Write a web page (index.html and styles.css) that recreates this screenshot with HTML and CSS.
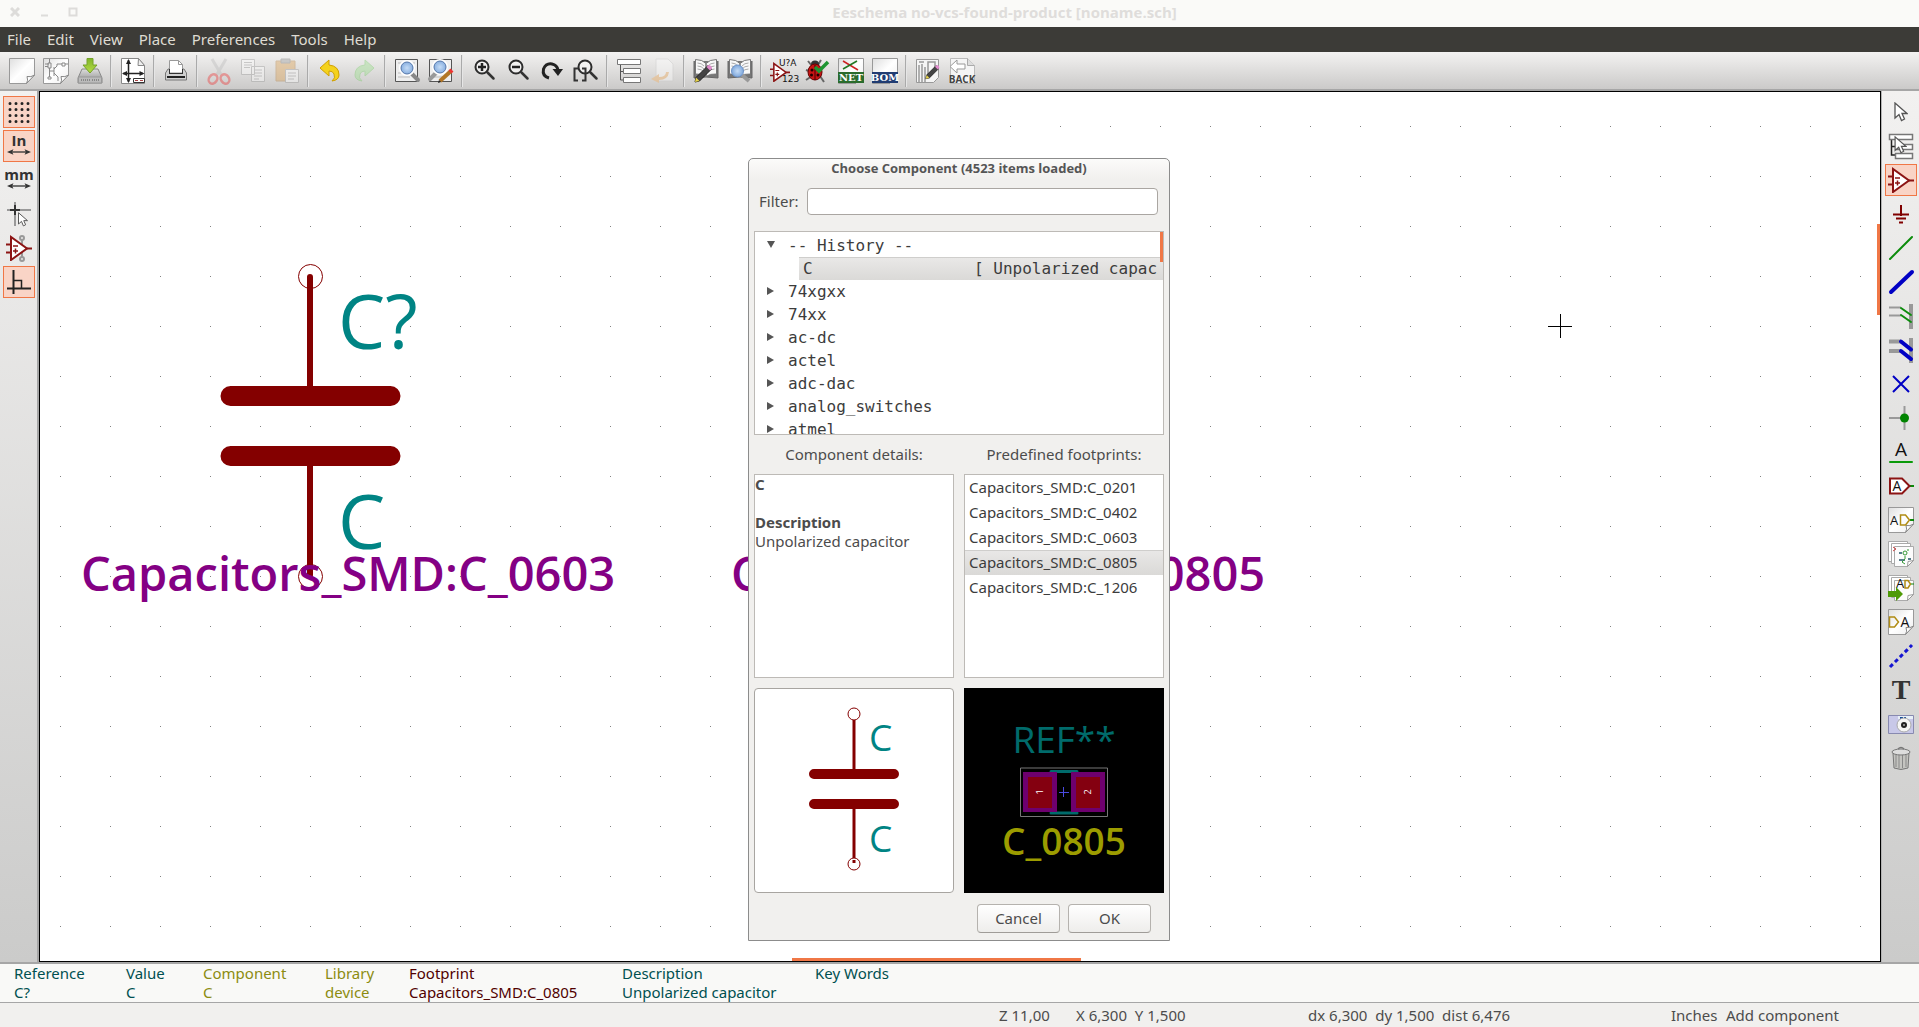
FILE: index.html
```html
<!DOCTYPE html>
<html lang="en">
<head>
<meta charset="utf-8">
<meta name="viewport" content="width=device-width, initial-scale=1">
<title>Eeschema no-vcs-found-product [noname.sch]</title>
<link rel="stylesheet" href="styles.css">
</head>
<body>
<svg class="defs" aria-hidden="true">
  <defs>
    <linearGradient id="paper" x1="0" y1="0" x2="1" y2="1"><stop offset="0" stop-color="#dedede"/><stop offset=".5" stop-color="#fff"/><stop offset="1" stop-color="#eee"/></linearGradient>
    <linearGradient id="metal" x1="0" y1="0" x2="0" y2="1"><stop offset="0" stop-color="#ddd"/><stop offset="1" stop-color="#8a8a8a"/></linearGradient>
    <linearGradient id="green" x1="0" y1="0" x2="0" y2="1"><stop offset="0" stop-color="#7fb52a"/><stop offset="1" stop-color="#b6dc46"/></linearGradient>
    <radialGradient id="lens"><stop offset="0" stop-color="#c5dcf6"/><stop offset="1" stop-color="#7fa8dc"/></radialGradient>
    <symbol id="sheet" viewBox="0 0 26 26"><path d="M.5 .5H25.500V17l-8 8.500H.5z" fill="url(#paper)" stroke="#999"/><path d="M25.500 17l-8 8.500q2-3 .5-7 4 1 7.500-1.500z" fill="#fff" stroke="#888"/></symbol>
    <symbol id="opamp" viewBox="0 0 26 26"><path d="M0 9.500h5M0 17.500h5M20 13.500h6" stroke="#8c1414" stroke-width="2"/><path d="M5 2v23L21 13.500z" fill="#fff" stroke="#8c1414" stroke-width="2"/><path d="M7 11h5M7 16h5M9.500 13.500v5" stroke="#8c1414" stroke-width="1.500"/></symbol>
    <symbol id="pointer" viewBox="0 0 14 20"><path d="M1 1v15l4-3.500 2.500 6 3-1.500-2.500-5.500h5z" fill="#fff" stroke="#555" stroke-width="1.300"/></symbol>
    <symbol id="glass" viewBox="0 0 26 26"><path d="M13.500 13.500l6 6" stroke="#333" stroke-width="2.500" stroke-linecap="round"/><circle cx="8" cy="8" r="6.500" fill="#fff" fill-opacity=".5" stroke="#2c2c2c" stroke-width="2"/></symbol>
    <symbol id="pencil" viewBox="0 0 20 20"><path d="M2 14.500L14 2.500l3.500 3.500L5.500 18 1 19z" fill="#444" stroke="#222"/><path d="M12.500 4l2-2q3 0 3.500 3.500l-2 2z" fill="#e08ccc"/><path d="M2 14.500L5.500 18 1 19z" fill="#e8d44c"/></symbol>
    <symbol id="book" viewBox="0 0 26 22"><path d="M1 3v17l12-1 12 1V3" fill="#777" stroke="#666"/><path d="M2.500 1.500q7 0 10.500 4v13q-4-3-10.500-2.500zM23.500 1.500q-7 0-10.500 4v13q4-3 10.500-2.500z" fill="#f8f8f8" stroke="#777"/><path d="M4.500 5q4 0 6.500 3M4.500 8q4 0 6.500 3M4.500 11q4 0 6.500 3M21.500 5q-4 0-6.500 3M21.500 8q-4 0-6.500 3M21.500 11q-4 0-6.500 3" fill="none" stroke="#aaa"/></symbol>
    <symbol id="leftright" viewBox="0 0 26 6"><path d="M3 3h20" stroke="#3a3a3a" stroke-width="1.500"/><path d="M0 3l7-3-1.500 3L7 6zM26 3l-7-3 1.500 3L19 6z" fill="#333"/></symbol>
    <symbol id="pages" viewBox="0 0 26 26"><path d="M.5 .5h19v20H.5z" fill="#fff" stroke="#aaa"/><path d="M3.500 2.500h19v20h-19z" fill="#fff" stroke="#aaa"/><path d="M6.500 5.500h19v14l-6 6h-13z" fill="#fcfcfc" stroke="#aaa"/><path d="M25.500 19.500l-6 6 .5-5z" fill="#fff" stroke="#999"/></symbol>
  </defs>
</svg>

<header class="titlebar">
  <div class="window-buttons">
    <button aria-label="Close"><svg width="10" height="10"><path d="M1 1l8 8M9 1L1 9" stroke="#dddcda" stroke-width="3"/></svg></button>
    <button aria-label="Minimize"><svg width="10" height="10"><path d="M2 8.500h7" stroke="#dddcda" stroke-width="2"/></svg></button>
    <button aria-label="Maximize"><svg width="10" height="10"><path d="M1.500 1.500h7v7h-7z" fill="none" stroke="#dddcda" stroke-width="2"/></svg></button>
  </div>
  <h1>Eeschema no-vcs-found-product [noname.sch]</h1>
</header>

<nav class="menubar">
  <button>File</button><button>Edit</button><button>View</button><button>Place</button><button>Preferences</button><button>Tools</button><button>Help</button>
</nav>

<div class="toolbar" role="toolbar" aria-label="Main tools">
  <button aria-label="New"><svg class="icon"><use href="#sheet"/></svg></button>
  <button aria-label="Open"><svg class="icon"><use href="#sheet"/><path d="M2 6h4M2 8.500h3M6.500 1v4M5 5h3v5H5zM6.500 10v9M6.500 13H11M11 9v9M11 11l3-3V6h5M11 15l4 4v4M19 5h3v3h-3zM22 6h3M5 19h3v2H5z" fill="none" stroke="#888"/></svg></button>
  <button aria-label="Save"><svg class="icon"><path d="M5 11h16l4 9v5H1v-5z" fill="url(#metal)" stroke="#888"/><path d="M1.500 19h23v6h-23z" fill="#bbb" stroke="#999"/><path d="M4 22h9M15 22h8" stroke="#888" stroke-width="2" stroke-dasharray="1 1"/><path d="M10 .5h6V7h4l-7 8-7-8h4z" fill="url(#green)" stroke="#76a32a"/></svg></button>
  <span class="sep"></span>
  <button aria-label="Page settings"><svg class="icon"><path d="M1.500 .5h17l6 7v18h-23z" fill="#fff" stroke="#888"/><path d="M18.500 .5l-.5 7h6.500z" fill="#eee" stroke="#888"/><path d="M8.500 2v22M3 15.500h20" stroke="#222" stroke-width="1.500"/><path d="M8.500 1l-2.500 5h5zM8.500 25L6 20h5zM2 15.500l5-2.500v5zM24.500 15.500l-5-2.500v5z" fill="#222"/><path d="M13.500 20.500h11v4h-11z" fill="#fff" stroke="#333"/><path d="M15 22.500h3M20 22.500h3" stroke="#a44"/></svg></button>
  <span class="sep"></span>
  <button aria-label="Print"><svg class="icon"><path d="M5 11h16l2.500 4v7h-21v-7z" fill="#d0d0d0" stroke="#777"/><path d="M6.500 15V2.500h9l4 4V15z" fill="#fff" stroke="#999"/><path d="M15.500 2.500v4h4" fill="none" stroke="#999"/><path d="M6 11h1v4h12v-4h1v5H6z" fill="#333"/><path d="M4 18h18v2H4z" fill="#222"/></svg></button>
  <span class="sep"></span>
  <button disabled aria-label="Cut"><svg class="icon faded"><path d="M6 1l10 17M20 1L10 18" stroke="#bbb" stroke-width="3"/><ellipse cx="7" cy="21" rx="4" ry="5" transform="rotate(35 7 21)" fill="none" stroke="#e33" stroke-width="2.500"/><ellipse cx="19" cy="21" rx="4" ry="5" transform="rotate(-35 19 21)" fill="none" stroke="#e33" stroke-width="2.500"/></svg></button>
  <button disabled aria-label="Copy"><svg class="icon faded"><path d="M1.500 1.500h13v15h-13zM11.500 8.500h13v15h-13z" fill="#fff" stroke="#999"/><path d="M4 4.500h8M4 7h8M4 9.500h6M14 12h8M14 15h8M14 18h8M14 21h5" stroke="#999"/></svg></button>
  <button disabled aria-label="Paste"><svg class="icon faded"><path d="M2 3h19v20H2z" fill="#dca050" stroke="#b48040"/><path d="M7 1h9v4H7z" fill="#999" stroke="#777"/><path d="M11.500 11.500h13v13h-13z" fill="#fff" stroke="#999"/><path d="M14 15h8M14 18h8M14 21h6" stroke="#999"/></svg></button>
  <span class="sep"></span>
  <button aria-label="Undo"><svg class="icon"><path d="M12 2v5q10 1 10 10 0 5-7 6 4-3 2-7-1-3-5-3v5L3 10z" fill="#f4d21c" stroke="#d0a000"/></svg></button>
  <button disabled aria-label="Redo"><svg class="icon faded"><path d="M14 2v5Q4 8 4 17q0 5 7 6-4-3-2-7 1-3 5-3v5l9-8z" fill="#9be08c" stroke="#7c6"/></svg></button>
  <span class="sep"></span>
  <button aria-label="Find"><svg class="icon"><path d="M1.500 1.500h22v22h-22z" fill="#eee" stroke="#555"/><path d="M4 5h17M4 15h4M4 19h12" stroke="#bbb"/><path d="M17 15l7 7" stroke="#888" stroke-width="4" stroke-linecap="round"/><circle cx="13" cy="10" r="7" fill="url(#lens)" stroke="#fff" stroke-width="2"/><circle cx="13" cy="10" r="6" fill="none" stroke="#5577aa"/></svg></button>
  <button aria-label="Find and replace"><svg class="icon"><path d="M1.500 1.500h22v22h-22z" fill="#eee" stroke="#555"/><path d="M4 19h12" stroke="#bbb"/><path d="M9 14l-7 7" stroke="#999" stroke-width="4" stroke-linecap="round"/><circle cx="12" cy="9" r="7" fill="url(#lens)" stroke="#fff" stroke-width="2"/><circle cx="12" cy="9" r="6" fill="none" stroke="#5577aa"/><path d="M12 23L23 13" stroke="#b27626" stroke-width="4"/><path d="M22 14l2-2" stroke="#e33" stroke-width="4"/><path d="M10 25l1-3 2 2z" fill="#222"/></svg></button>
  <span class="sep"></span>
  <button aria-label="Zoom in"><svg class="icon"><g transform="translate(3 1)"><use href="#glass" width="26" height="26"/><path d="M4 8h8M8 4v8" stroke="#222" stroke-width="2.500"/></g></svg></button>
  <button aria-label="Zoom out"><svg class="icon"><g transform="translate(3 1)"><use href="#glass" width="26" height="26"/><path d="M4 8h8" stroke="#222" stroke-width="2.500"/></g></svg></button>
  <button aria-label="Redraw"><svg class="icon"><path d="M10 20Q3 18 4.500 11 7 5 13 6q5 1 6 6" fill="none" stroke="#222" stroke-width="3"/><path d="M13.500 11H24l-5 7z" fill="#222"/></svg></button>
  <button aria-label="Zoom to fit"><svg class="icon"><g transform="translate(4 1)"><use href="#glass" width="26" height="26"/></g><path d="M5 10.500H1.500v12H5M9 10.500h3.500v12H9" fill="none" stroke="#333" stroke-width="2"/></svg></button>
  <span class="sep"></span>
  <button aria-label="Hierarchy"><svg class="icon"><path d="M4.500 7v15H9M4.500 13.500H8" fill="none" stroke="#555"/><path d="M1.500 1.500h23v5h-23zM7.500 10.500h17v5h-17zM7.500 19.500h17v5h-17z" fill="#fff" stroke="#777"/></svg></button>
  <button disabled aria-label="Leave sheet"><svg class="icon faded"><path d="M6 1h12l5 5v17H6z" fill="#fff" stroke="#ccc"/><path d="M16 14q0 5-7 5v-3l-8 5 8 4v-3q9 0 10-8z" fill="#f4b060"/></svg></button>
  <span class="sep"></span>
  <button aria-label="Library editor"><svg class="icon"><use href="#book" width="26" height="22"/><use href="#pencil" x="1" y="5" width="20" height="20"/></svg></button>
  <button aria-label="Library browser"><svg class="icon"><use href="#book" width="26" height="22"/><path d="M15 17l7 6" stroke="#999" stroke-width="4"/><circle cx="10.500" cy="13" r="6" fill="url(#lens)" stroke="#6d93c8"/></svg></button>
  <span class="sep"></span>
  <button aria-label="Annotate"><svg class="icon"><use href="#opamp" y="4" width="20" height="20"/><text x="9" y="8" class="tiny">U?A</text><text x="12" y="24" class="tiny">123</text></svg></button>
  <button aria-label="Electrical rules check"><svg class="icon"><path d="M4 3l4 5M17 2l-3 5M2 12l6 2M2 22l6-4M20 24l-4-6" stroke="#666" stroke-width="2"/><ellipse cx="11" cy="6" rx="4" ry="3.500" fill="#333"/><ellipse cx="11" cy="14" rx="7" ry="8" fill="#c81414" stroke="#600"/><path d="M11 7v15" stroke="#400"/><g fill="#200"><circle cx="8" cy="12" r="1.500"/><circle cx="14" cy="12" r="1.500"/><circle cx="7.500" cy="17" r="1.500"/><circle cx="14" cy="17" r="1.500"/></g><path d="M11 9l4 4 9-9" fill="none" stroke="#1e9632" stroke-width="3.500"/></svg></button>
  <button aria-label="Generate netlist"><svg class="icon"><use href="#sheet"/><path d="M5 3l15 9" stroke="#c22" stroke-width="1.500"/><path d="M5 11l14-8" stroke="#272" stroke-width="1.500"/><path d="M0 14h26v11H0z" fill="#2a6b2c"/><text x="13" y="23" class="tag">NET</text></svg></button>
  <button aria-label="Bill of materials"><svg class="icon"><use href="#sheet"/><path d="M0 14h26v11H0z" fill="#203c72"/><text x="13" y="23" class="tag">BOM</text></svg></button>
  <span class="sep"></span>
  <button aria-label="Run Pcbnew"><svg class="icon"><path d="M1.500 1.500h22v18l-5 5h-17z" fill="#f5f5f5" stroke="#999"/><path d="M4 24V7M7 24V6M10 24V9M13 20V4h7v6M4 4h5" fill="none" stroke="#999" stroke-width="1.500"/><use href="#pencil" x="10" y="5" width="16" height="17"/></svg></button>
  <button aria-label="Back import"><svg class="icon"><path d="M1.500 .5h17l7 7v18h-24z" fill="#f5f5f5" stroke="#bbb"/><path d="M18.500 .5v7h7" fill="#ddd" stroke="#aaa"/><path d="M1 8.500L8 2v4h8v5H8v4z" fill="#fff" stroke="#999"/><text x="13" y="25" class="back">BACK</text></svg></button>
</div>

<main class="workspace">
  <div class="sidebar" role="toolbar" aria-label="Display options">
    <button class="on" aria-label="Grid"><svg class="icon"><path d="M4 4.500h22M4 10.500h22M4 16.500h22M4 22.500h22" stroke="#222" stroke-width="3" stroke-linecap="round" stroke-dasharray="0 6"/></svg></button>
    <button class="on" aria-label="Inches"><svg class="icon"><text x="13" y="13" class="unit">In</text><use href="#leftright" x="1" y="16" width="24" height="6"/></svg></button>
    <button aria-label="Millimetres"><svg class="icon"><text x="13" y="13" class="unit">mm</text><use href="#leftright" x="1" y="16" width="24" height="6"/></svg></button>
    <button aria-label="Cursor shape"><svg class="icon"><path d="M1 9h3M14 9h11M9 1v3M9 14v11" stroke="#999" stroke-width="2"/><path d="M4 9h10M9 4v10" stroke="#333" stroke-width="2"/><use href="#pointer" x="11" y="11" width="12" height="15"/></svg></button>
    <button aria-label="Hidden pins"><svg class="icon"><g fill="none" stroke="#999" stroke-width="2"><circle cx="16" cy="3" r="2"/><circle cx="16" cy="24" r="2"/><path d="M16 5v17"/></g><use href="#opamp" width="26" height="26"/></svg></button>
    <button class="on" aria-label="Right angle wires"><svg class="icon"><path d="M7.500 1v24M1 19.500h24" stroke="#222" stroke-width="2"/><path d="M8 11.500h7.500V19" fill="none" stroke="#222" stroke-width="1.500"/></svg></button>
  </div>

  <section class="canvas" aria-label="Schematic">
    <svg class="drawing">
      <defs><pattern id="grid" x="20" y="34" width="50" height="50" patternUnits="userSpaceOnUse"><rect width="1" height="1" fill="#848484"/></pattern></defs>
      <rect width="100%" height="100%" fill="url(#grid)"/>
      <g class="part">
        <circle cx="270.500" cy="184.500" r="12" class="pin"/>
        <circle cx="270.500" cy="484.500" r="12" class="pin"/>
        <path d="M270 185v110M270 370v113" stroke-width="6" stroke-linecap="round"/>
        <path d="M190.500 304h160M190.500 364h160" stroke-width="20" stroke-linecap="round"/>
      </g>
      <text x="298" y="257" class="ref">C?</text>
      <text x="298" y="457" class="ref">C</text>
      <text x="41" y="499" class="footprint">Capacitors_SMD:C_0603</text>
      <text x="691" y="499" class="footprint">Capacitors_SMD:C_0805</text>
      <path d="M1508 234.500h24M1520.500 222v24" stroke="#000"/>
    </svg>
    <span class="thumb-v"></span>
    <span class="thumb-h"></span>

    <form class="dialog" role="dialog" aria-labelledby="dialog-title">
      <h2 id="dialog-title">Choose Component (4523 items loaded)</h2>
      <div class="filter"><label for="filter">Filter:</label><input id="filter" type="text"></div>
      <div class="tree">
        <ul role="tree">
          <li class="open" role="treeitem">-- History --</li>
          <li class="leaf" role="treeitem" aria-selected="true"><span class="name">C</span><span class="summary">[ Unpolarized capacitor ]</span></li>
          <li role="treeitem">74xgxx</li>
          <li role="treeitem">74xx</li>
          <li role="treeitem">ac-dc</li>
          <li role="treeitem">actel</li>
          <li role="treeitem">adc-dac</li>
          <li role="treeitem">analog_switches</li>
          <li role="treeitem">atmel</li>
        </ul>
      </div>
      <div class="panes">
        <h3>Component details:</h3>
        <h3>Predefined footprints:</h3>
        <div class="pane details"><b>C</b><br><br><b>Description</b><br>Unpolarized capacitor</div>
        <ul class="pane footprints" role="listbox" aria-label="Predefined footprints">
          <li role="option">Capacitors_SMD:C_0201</li>
          <li role="option">Capacitors_SMD:C_0402</li>
          <li role="option">Capacitors_SMD:C_0603</li>
          <li role="option" aria-selected="true">Capacitors_SMD:C_0805</li>
          <li role="option">Capacitors_SMD:C_1206</li>
        </ul>
        <svg class="preview symbol" viewBox="0 0 198 203">
          <g class="part">
            <circle cx="99" cy="25" r="6" class="pin"/>
            <circle cx="99" cy="175" r="6" class="pin"/>
            <path d="M99 31v50M99 118v51M99 171v3" stroke-width="3"/>
            <path d="M59 85h80M59 115h80" stroke-width="10" stroke-linecap="round"/>
          </g>
          <text x="114" y="62" class="ref small">C</text>
          <text x="114" y="163" class="ref small">C</text>
        </svg>
        <svg class="preview board" viewBox="0 0 200 205">
          <text x="100" y="65" class="fp-ref">REF**</text>
          <path d="M56.500 80h87v48.500h-87z" fill="none" stroke="#777"/>
          <path d="M87 83.500h26M87 125h26" stroke="#006b6b" stroke-width="3" stroke-linecap="round"/>
          <path d="M59 84h34v40H59zM107 84h34v40h-34z" fill="#6e006e"/>
          <path d="M64 89h24v31H64zM112 89h24v31h-24z" fill="#840010"/>
          <path d="M95 104.500h10M99.500 99v10" stroke="#4a4ae0"/>
          <text transform="translate(79 104) rotate(-90)" class="pad">1</text>
          <text transform="translate(127 104) rotate(-90)" class="pad">2</text>
          <text x="100" y="167" class="fp-val">C_0805</text>
        </svg>
      </div>
      <div class="actions"><button type="button">Cancel</button><button type="button">OK</button></div>
    </form>
  </section>

  <div class="sidebar right" role="toolbar" aria-label="Drawing tools">
    <button aria-label="Select"><svg class="icon"><use href="#pointer" x="6" y="3" width="14" height="20"/></svg></button>
    <button aria-label="Navigate hierarchy"><svg class="icon"><path d="M3.500 6v16H8M3.500 13.500H8" fill="none" stroke="#222" stroke-width="1.500"/><path d="M1.500 1.500h23v5h-23zM8.500 11.500h16v5h-16zM7.500 20.500h17v5h-17z" fill="#fff" stroke="#777" stroke-width="1.500"/><use href="#pointer" x="6" y="3" width="13" height="18"/></svg></button>
    <button class="on" aria-label="Place component"><svg class="icon"><use href="#opamp" width="26" height="26"/></svg></button>
    <button aria-label="Place power port"><svg class="icon"><path d="M13 4v11" stroke="#800000" stroke-width="2"/><path d="M5 13.500h16M8 17.500h10M11 21.500h4" stroke="#800000" stroke-width="2"/></svg></button>
    <button aria-label="Place wire"><svg class="icon"><path d="M2 24L24 2" stroke="#0c8c0c" stroke-width="2" stroke-linecap="round"/></svg></button>
    <button aria-label="Place bus"><svg class="icon"><path d="M3 23L24 3" stroke="#0000c4" stroke-width="4" stroke-linecap="round"/></svg></button>
    <button aria-label="Wire entry"><svg class="icon"><path d="M1 4.500h12M1 12.500h12" stroke="#999" stroke-width="2"/><path d="M23 1v25" stroke="#999" stroke-width="4"/><path d="M13 5l10 7M13 12l10 7" stroke="#0c8c0c" stroke-width="2" stroke-linecap="round"/></svg></button>
    <button aria-label="Bus entry"><svg class="icon"><path d="M1 4.500h12M1 14h12" stroke="#999" stroke-width="4"/><path d="M23 1v25" stroke="#999" stroke-width="4"/><path d="M13 4.500l10 8M13 14l10 8" stroke="#0000c4" stroke-width="4" stroke-linecap="round"/></svg></button>
    <button aria-label="No connect"><svg class="icon"><path d="M5 5l16 16M21 5L5 21" stroke="#0000c4" stroke-width="2"/></svg></button>
    <button aria-label="Junction"><svg class="icon"><path d="M1 13h12M16.500 1v24" stroke="#999" stroke-width="2"/><circle cx="16.500" cy="13" r="4.500" fill="#008400"/></svg></button>
    <button aria-label="Net label"><svg class="icon"><text x="13" y="17" class="letter">A</text><path d="M2 23h22" stroke="#0a9a0a" stroke-width="2" stroke-linecap="round"/></svg></button>
    <button aria-label="Global label"><svg class="icon"><path d="M21 13h5" stroke="#0a8a0a" stroke-width="2"/><path d="M2 5.500h12l7.500 7.500-7.500 7.500H2z" fill="#fff" stroke="#8c1414" stroke-width="2"/><text x="9" y="18" class="letter mid">A</text></svg></button>
    <button aria-label="Hierarchical label"><svg class="icon"><use href="#sheet"/><path d="M22 13h4" stroke="#0a8a0a" stroke-width="2"/><path d="M12.500 8h5l4 5-4 5h-5z" fill="none" stroke="#b08c14" stroke-width="1.500"/><text x="6" y="18" class="letter small">A</text></svg></button>
    <button aria-label="Hierarchical sheet"><svg class="icon"><use href="#pages"/><path d="M5 6l3 2M5 10l3-2" stroke="#c44"/><path d="M11 12h3M11 19h6M20 18h3" stroke="#256" stroke-width="1.500"/><circle cx="17" cy="12" r="2" fill="none" stroke="#393"/><path d="M17 15v3l-3 3 3 2M20 10v-2" fill="none" stroke="#393"/></svg></button>
    <button aria-label="Import labels"><svg class="icon"><use href="#pages"/><text x="12" y="13" class="letter small">A</text><path d="M17 5.500h3l2.500 3.500-2.500 4h-3z" fill="none" stroke="#b08c14" stroke-width="1.500"/><path d="M23 9h3" stroke="#0a8a0a"/><path d="M0 16h8v-4l7 7-7 7v-4H0z" fill="#4e9a06"/></svg></button>
    <button aria-label="Sheet pin"><svg class="icon"><use href="#sheet"/><path d="M1.500 8h5l4 5-4 5h-5z" fill="none" stroke="#b08c14" stroke-width="1.500"/><text x="17" y="18" class="letter mid">A</text></svg></button>
    <button aria-label="Graphic line"><svg class="icon"><path d="M2 24L24 2" stroke="#1414d2" stroke-width="3" stroke-dasharray="4 3"/></svg></button>
    <button aria-label="Text"><svg class="icon"><text x="13" y="22" class="bigtext">T</text></svg></button>
    <button aria-label="Image"><svg class="icon"><path d="M.5 4.500h25v18H.5z" fill="#c8c8e8" stroke="#888ab0"/><path d="M10 5h15v3H10z" fill="#e8f0f8"/><path d="M12 7h3M16 7h2" stroke="#124a9a" stroke-width="2"/><circle cx="16" cy="14" r="7" fill="#f5f5f5" stroke="#aaa"/><circle cx="16" cy="14" r="3" fill="#222"/><circle cx="16" cy="14" r="1" fill="#aaa"/></svg></button>
    <button aria-label="Delete"><svg class="icon"><path d="M5 8h16l-1 15q-7 3-14 0z" fill="#c4c4c0" stroke="#777"/><path d="M8 10v12M11 10v13M14.500 10v13M18 10v12" stroke="#888"/><ellipse cx="13" cy="7" rx="9" ry="3" fill="#ddd" stroke="#777"/><path d="M10 4q3-3 6 0" fill="none" stroke="#777" stroke-width="1.500"/></svg></button>
  </div>
</main>

<dl class="message-panel">
  <div class="teal"><dt>Reference</dt><dd>C?</dd></div>
  <div class="teal"><dt>Value</dt><dd>C</dd></div>
  <div class="olive"><dt>Component</dt><dd>C</dd></div>
  <div class="olive"><dt>Library</dt><dd>device</dd></div>
  <div class="maroon"><dt>Footprint</dt><dd>Capacitors_SMD:C_0805</dd></div>
  <div class="teal"><dt>Description</dt><dd>Unpolarized capacitor</dd></div>
  <div class="teal"><dt>Key Words</dt><dd></dd></div>
</dl>
<footer class="statusbar">
  <span></span><span>Z 11,00</span><span>X 6,300&nbsp; Y 1,500</span><span>dx 6,300&nbsp; dy 1,500&nbsp; dist 6,476</span><span>Inches</span><span>Add component</span>
</footer>
</body>
</html>
```
FILE: styles.css
```css
* { box-sizing: border-box; }
body {
  margin: 0;
  min-height: 100vh;
  display: flex;
  flex-direction: column;
  background: #f1f0ee;
  color: #4c4c4c;
  font: 15px/19px "Noto Sans", "Open Sans", sans-serif;
}
h1, h2, h3, ul, dl, dd { margin: 0; padding: 0; list-style: none; }
button { font: inherit; color: inherit; border: 0; padding: 0; background: none; }
.defs { position: absolute; width: 0; height: 0; }
.icon { display: block; width: 26px; height: 26px; overflow: visible; }
.icon.faded { opacity: .4; }

.titlebar { display: flex; height: 27px; padding: 0 0 3px 10px; align-items: center; background: #fafaf8; }
.window-buttons { display: flex; gap: 19px; width: 80px; }
.window-buttons svg { display: block; }
.titlebar h1 { flex: 1; text-align: center; font: 700 15px/19px "Open Sans", sans-serif; color: #dfdddb; }

.menubar { display: flex; height: 25px; padding-left: 7px; gap: 16px; background: #3c3b37; color: #dfdbd2; }

.toolbar {
  display: flex;
  align-items: center;
  height: 39px;
  padding: 1px 5px 0;
  background: linear-gradient(#f3f2f1, #cbcac9);
  border-bottom: 2px solid #a6a6a6;
}
.toolbar button { flex: none; width: 34px; display: grid; place-items: center; }
.sep { flex: none; width: 2px; height: 32px; margin: 0 4px 0 3px; border-left: 1px solid #aaa; border-right: 1px solid #e6e6e6; }

.workspace { flex: 1; display: flex; }
.sidebar {
  flex: none;
  width: 39px;
  padding: 5px 0 0 3px;
  display: flex;
  flex-direction: column;
  gap: 2px;
  background: linear-gradient(#f2f1f0, #cbcbca);
  border-right: 2px solid #a6a6a6;
}
.sidebar.right { width: 38px; border-right: 0; border-left: 1px solid #b4b4b4; }
.sidebar button { width: 32px; height: 32px; display: grid; place-items: center; border: 1px solid transparent; }
.sidebar .on { background: #f9d4c6; border-color: #f07746; }

.tiny { font: 9px "DejaVu Sans", sans-serif; fill: #111; }
.tag { font: bold 10px "DejaVu Serif", serif; fill: #fff; text-anchor: middle; }
.back { font: bold 10px "Open Sans", sans-serif; fill: #444; text-anchor: middle; }
.unit { font: bold 15px "Open Sans", sans-serif; fill: #333; text-anchor: middle; }
.letter { font: 19px "Open Sans", sans-serif; fill: #111; text-anchor: middle; }
.letter.mid { font-size: 14px; }
.letter.small { font-size: 13px; }
.bigtext { font: bold 28px "Liberation Serif", serif; fill: #333; text-anchor: middle; }

.canvas { flex: 1; position: relative; min-height: 871px; background: #fff; border: 1px solid #000; overflow: hidden; }
.drawing { position: absolute; inset: 0; width: 100%; height: 100%; }
.part { fill: none; stroke: #840000; }
.pin { stroke-width: 1; }
.ref { font: 75px "Open Sans", sans-serif; fill: #008484; }
.ref.small { font-size: 37px; }
.footprint { font: 600 47px "Open Sans", sans-serif; fill: #840084; }
.thumb-v { position: absolute; right: 0; top: 132px; width: 3px; height: 91px; background: #f07746; }
.thumb-h { position: absolute; left: 752px; bottom: 0; width: 289px; height: 3px; background: #f07746; }

.dialog {
  position: absolute;
  left: 708px;
  top: 66px;
  width: 422px;
  padding: 0 5px 7px;
  background: linear-gradient(#fbfbfa, #f1f0ee 20px);
  border: 1px solid #8c8c8c;
  border-radius: 5px 5px 0 0;
}
.dialog h2 { font: 700 13px/19px "Open Sans", sans-serif; text-align: center; color: #555; }
.filter { display: flex; align-items: center; gap: 8px; padding: 10px 6px 16px 5px; }
.filter input { flex: 1; min-width: 0; height: 27px; border: 1px solid #aaa6a2; border-radius: 4px; background: #fff; }
.tree { height: 204px; overflow: hidden; background: #fff; border: 1px solid #bdbab6; padding-top: 2px; position: relative; font: 16px/23px "DejaVu Sans Mono", monospace; color: #3c3c3c; }
.tree::after { content: ""; position: absolute; right: 0; top: 0; width: 3px; height: 30px; background: #f07746; }
.tree li { padding-left: 33px; position: relative; white-space: nowrap; }
.tree li::before { content: ""; position: absolute; left: 12px; top: 7px; border: 4px solid transparent; border-left: 7px solid #555; border-right: 0; }
.tree li.open::before { border: 4px solid transparent; border-top: 7px solid #555; border-bottom: 0; }
.tree .leaf { display: flex; margin-left: 44px; padding-left: 4px; background: linear-gradient(#e9e8e7, #dad9d7); border-top: 1px solid #cfcecc; line-height: 22px; }
.tree .leaf::before { display: none; }
.tree .leaf span { flex: none; overflow: hidden; }
.tree .name { width: 171px; }
.tree .summary { width: 184px; }
.panes { display: grid; grid-template-columns: 1fr 1fr; column-gap: 10px; }
.panes h3 { font-size: 15px; font-weight: 400; line-height: 19px; text-align: center; padding: 10px 0; }
.pane { height: 204px; background: #fff; border: 1px solid #bdbab6; color: #3c3c3c; }
.details { color: #4c4c4c; }
.footprints { line-height: 25px; }
.footprints li { padding-left: 4px; }
.footprints li[aria-selected] { background: linear-gradient(#e9e8e7, #dad9d7); box-shadow: inset 0 1px #cfcecc; }
.preview { display: block; width: 100%; margin-top: 10px; height: 205px; }
.preview.symbol { background: #fff; border: 1px solid #a8a5a1; border-radius: 4px; }
.board { background: #000; }
.fp-ref, .fp-val { font: 600 37px "Open Sans", sans-serif; text-anchor: middle; fill: #006b6b; }
.fp-ref { font-weight: 400; }
.fp-val { fill: #9c9c00; }
.pad { font: 9px "Open Sans", sans-serif; fill: #fff; text-anchor: middle; }
.actions { display: flex; justify-content: flex-end; gap: 8px; padding: 11px 13px 0 0; }
.actions button { width: 83px; height: 29px; border: 1px solid #b5b2ae; border-bottom-color: #9f9c98; border-radius: 4px; background: linear-gradient(#fff, #eeedeb); }

.message-panel {
  display: grid;
  grid-template-columns: 112px 77px 122px 84px 213px 193px 1fr;
  padding: 0 0 0 14px;
  height: 41px;
  background: #f9f9f7;
  border-top: 2px solid #a6a6a6;
  border-bottom: 1px solid #a6a6a6;
}
.teal { color: #005050; }
.olive { color: #8c8c10; }
.maroon { color: #500000; }
.statusbar { display: grid; grid-template-columns: 999fr 77fr 232fr 363fr 55fr 193fr; height: 24px; line-height: 24px; white-space: nowrap; }
```
